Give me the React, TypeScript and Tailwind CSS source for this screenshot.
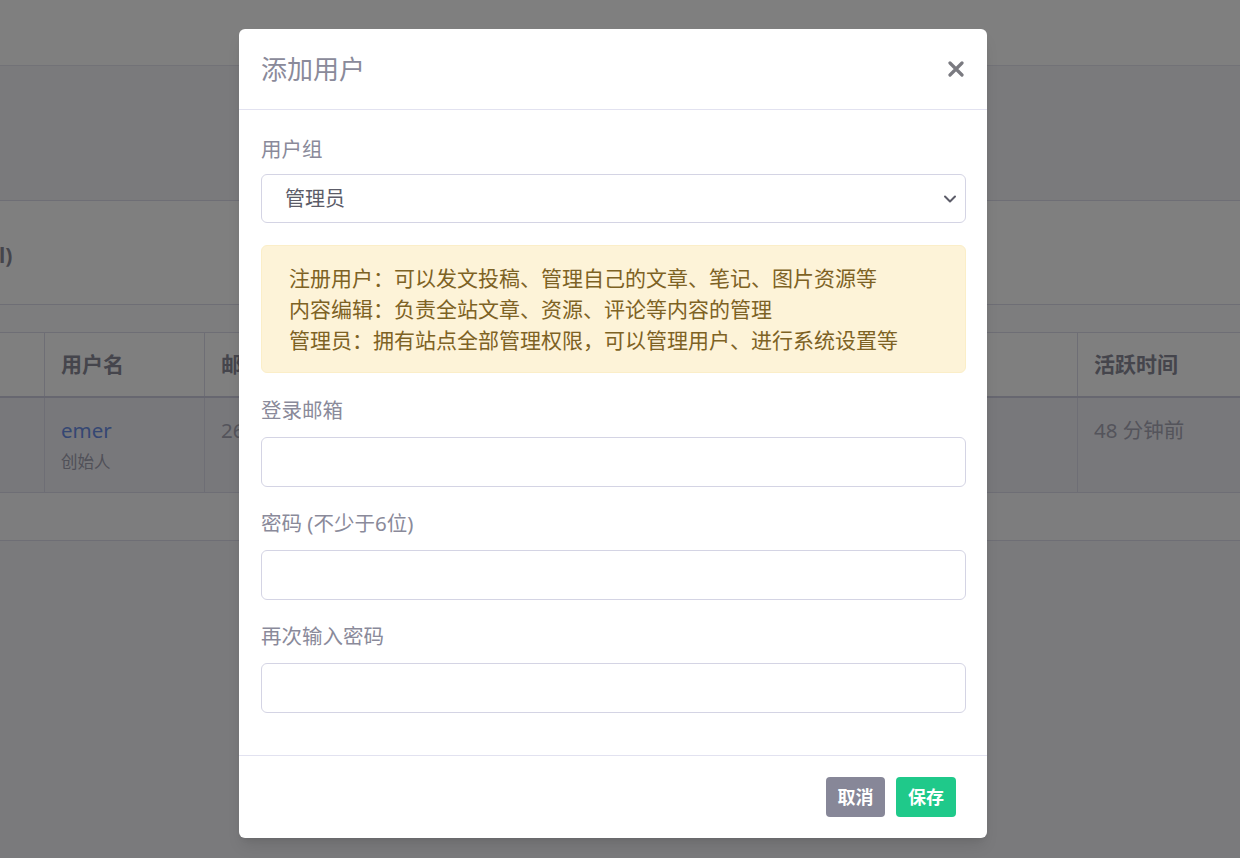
const fieldLabels = ['登录邮箱', '密码 (不少于6位)', '再次输入密码'];

function Backdrop() {
  return (
    <div className="h-[858px] overflow-hidden bg-[#f4f4f8]">
      <header className="h-[66px] border-b border-[#e4e4ee] bg-white" />
      <div className="pt-[134px]">
        <div className="border-y border-[#dcdcea] bg-white">
          <div className="flex h-[104px] items-center border-b border-[#dcdcea] pt-[6px]">
            <h2 className="-ml-[27px] text-[21px] font-bold text-[#8a8a98]">(all)</h2>
          </div>
          <div className="h-[27px] bg-[#fafafc]" />
          <div className="flex h-[66px] border-t border-b-2 border-[#dcdcea] border-b-[#cfcfe0] text-[21px] font-bold text-[#8a8a98]">
            <div className="w-[45px] shrink-0 border-r border-[#dcdcea]" />
            <div className="flex w-[160px] shrink-0 items-center border-r border-[#dcdcea] px-4">用户名</div>
            <div className="flex flex-1 items-center border-r border-[#dcdcea] px-4">邮箱</div>
            <div className="flex w-[162px] shrink-0 items-center px-4">活跃时间</div>
          </div>
          <div className="flex h-[95px] border-b border-[#dcdcea] bg-[#f1f1f7] text-[20.5px] text-[#a8a8b6]">
            <div className="w-[45px] shrink-0 border-r border-[#dcdcea]" />
            <div className="w-[160px] shrink-0 border-r border-[#dcdcea] px-4 pt-[19px]">
              <div className="leading-[26px] text-[#6a8ee6]">emer</div>
              <div className="mt-[8px] text-[16.5px] leading-[22px] text-[#a0a0b0]">创始人</div>
            </div>
            <div className="flex-1 border-r border-[#dcdcea] px-4 pt-[19px] leading-[26px]">2628916@qq.com</div>
            <div className="w-[162px] shrink-0 px-4 pt-[19px] leading-[26px]">48 分钟前</div>
          </div>
          <div className="h-[47px] bg-[#fafafc]" />
        </div>
      </div>
    </div>
  );
}

function Field({ label }: { label: string }) {
  return (
    <div>
      <label className="block text-[20.5px] leading-[27px] text-[#8a8a9a]">{label}</label>
      <input className="mt-[13px] block h-[50px] w-full rounded-md border border-[#d4d4e4] bg-white px-4 outline-none" />
    </div>
  );
}

export default function App() {
  return (
    <div className="relative h-[858px] w-full overflow-hidden font-['Noto_Sans','Noto_Sans_CJK_SC',sans-serif]">
      <Backdrop />
      <div className="absolute inset-0 bg-black/50" />
      <div className="absolute left-[239px] top-[29px] w-[748px] rounded-md bg-white shadow-lg">
        <div className="flex h-[81px] items-center justify-between border-b border-[#e2e2f0] pl-[22px] pr-[23px]">
          <h3 className="text-[26px] text-[#8a8a9a]">添加用户</h3>
          <button className="text-[#7a7a80]">
            <svg width="16" height="16" viewBox="0 0 16 16" fill="none" stroke="currentColor" strokeWidth="3.2" strokeLinecap="round">
              <path d="M2 2l12 12M14 2L2 14" />
            </svg>
          </button>
        </div>
        <div className="pl-[22px] pr-[21px] pt-[26px] pb-[42px]">
          <label className="block text-[20.5px] leading-[27px] text-[#8a8a9a]">用户组</label>
          <div className="relative mt-[11px] flex h-[49px] items-center rounded-md border border-[#d4d4e4] pl-[23px] text-[20px] text-[#5c5c68]">
            管理员
            <svg className="absolute right-[8px] top-[19px]" width="14" height="10" viewBox="0 0 14 10" fill="none" stroke="#5c5c68" strokeWidth="2" strokeLinecap="round" strokeLinejoin="round">
              <path d="M2 2.5l5 5 5-5" />
            </svg>
          </div>
          <div className="mt-[22px] rounded-md border border-[#fbeec8] bg-[#fdf3d8] px-[27px] pt-[17px] pb-[16px] text-[21px] leading-[31px] text-[#7d6224]">
            <p>注册用户：可以发文投稿、管理自己的文章、笔记、图片资源等</p>
            <p>内容编辑：负责全站文章、资源、评论等内容的管理</p>
            <p>管理员：拥有站点全部管理权限，可以管理用户、进行系统设置等</p>
          </div>
          <div className="mt-[24px] flex flex-col gap-[23px]">
            {fieldLabels.map((l) => (
              <Field key={l} label={l} />
            ))}
          </div>
        </div>
        <div className="flex h-[83px] items-center justify-end gap-[11px] border-t border-[#e2e2f0] pr-[31px]">
          <button className="h-[40px] w-[59px] rounded-[4px] bg-[#878798] text-[18px] font-bold text-white">取消</button>
          <button className="h-[40px] w-[60px] rounded-[4px] bg-[#1fc98a] text-[18px] font-bold text-white">保存</button>
        </div>
      </div>
    </div>
  );
}
